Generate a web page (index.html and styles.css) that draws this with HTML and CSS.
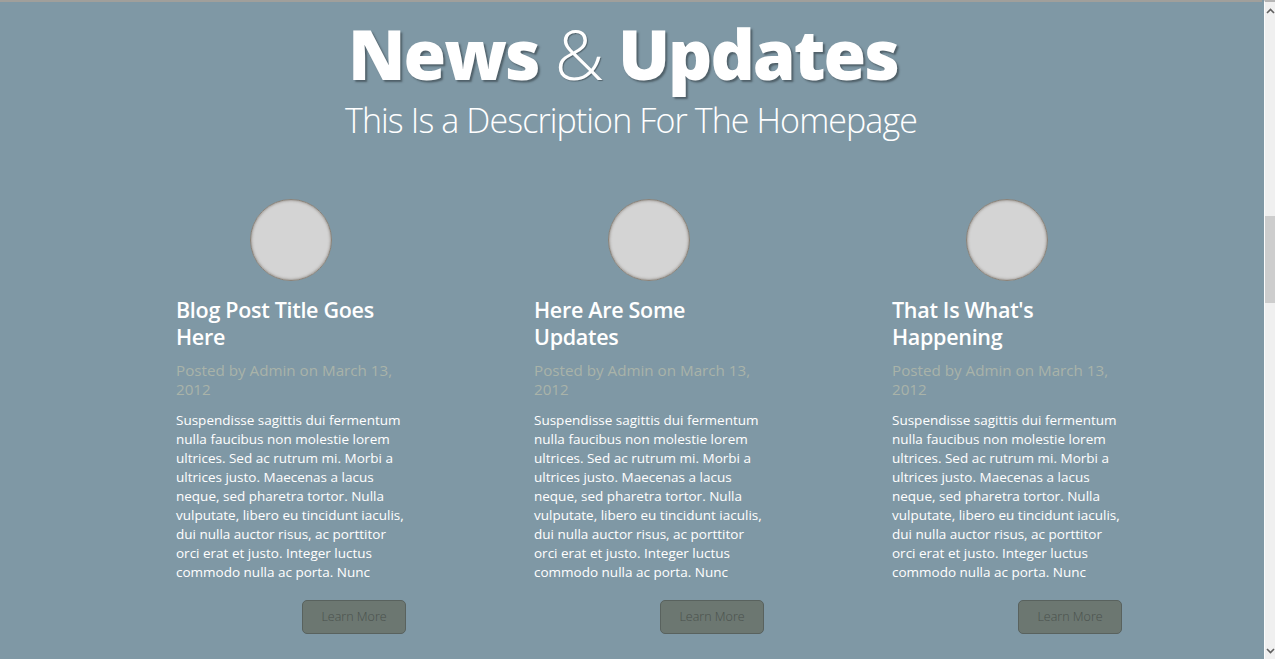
FILE: index.html
```html
<!DOCTYPE html>
<html>
<head>
<meta charset="utf-8">
<link rel="stylesheet" href="styles.css">
</head>
<body>
<section class="news">
  <header class="news-head">
    <h1 class="news-title"><strong>News</strong> <span class="amp">&amp;</span> <strong>Updates</strong></h1>
    <p class="news-desc">This Is a Description For The Homepage</p>
  </header>
  <div class="posts">
    <article class="post">
      <div class="thumb"></div>
      <h2 class="post-title">Blog Post Title Goes Here</h2>
      <p class="meta">Posted by Admin on March 13, 2012</p>
      <p class="excerpt">Suspendisse sagittis dui fermentum nulla faucibus non molestie lorem ultrices. Sed ac rutrum mi. Morbi a ultrices justo. Maecenas a lacus neque, sed pharetra tortor. Nulla vulputate, libero eu tincidunt iaculis, dui nulla auctor risus, ac porttitor orci erat et justo. Integer luctus commodo nulla ac porta. Nunc</p>
      <a class="btn" href="#">Learn More</a>
    </article>
    <article class="post">
      <div class="thumb"></div>
      <h2 class="post-title">Here Are Some Updates</h2>
      <p class="meta">Posted by Admin on March 13, 2012</p>
      <p class="excerpt">Suspendisse sagittis dui fermentum nulla faucibus non molestie lorem ultrices. Sed ac rutrum mi. Morbi a ultrices justo. Maecenas a lacus neque, sed pharetra tortor. Nulla vulputate, libero eu tincidunt iaculis, dui nulla auctor risus, ac porttitor orci erat et justo. Integer luctus commodo nulla ac porta. Nunc</p>
      <a class="btn" href="#">Learn More</a>
    </article>
    <article class="post">
      <div class="thumb"></div>
      <h2 class="post-title">That Is What's Happening</h2>
      <p class="meta">Posted by Admin on March 13, 2012</p>
      <p class="excerpt">Suspendisse sagittis dui fermentum nulla faucibus non molestie lorem ultrices. Sed ac rutrum mi. Morbi a ultrices justo. Maecenas a lacus neque, sed pharetra tortor. Nulla vulputate, libero eu tincidunt iaculis, dui nulla auctor risus, ac porttitor orci erat et justo. Integer luctus commodo nulla ac porta. Nunc</p>
      <a class="btn" href="#">Learn More</a>
    </article>
  </div>
</section>
<aside class="scrollbar" aria-hidden="true">
  <svg class="sb-arrow sb-up" width="9" height="6" viewBox="0 0 9 6"><path d="M1 5 L4.5 1.5 L8 5" fill="none" stroke="#606060" stroke-width="1.6"/></svg>
  <div class="sb-thumb"></div>
  <svg class="sb-arrow sb-down" width="9" height="6" viewBox="0 0 9 6"><path d="M1 1 L4.5 4.5 L8 1" fill="none" stroke="#606060" stroke-width="1.6"/></svg>
</aside>
</body>
</html>
```

FILE: styles.css
```css
html, body {
  margin: 0;
  padding: 0;
}
html {
  overflow: hidden;
}
body {
  background: #7f98a5;
  font-family: "Open Sans", "Liberation Sans", sans-serif;
  color: #fff;
  height: 659px;
  margin-right: 13px;
  border-top: 2px solid #a09f9b;
  box-sizing: border-box;
}
.news {
  display: flex;
  flex-direction: column;
  align-items: center;
}
.news-head {
  text-align: center;
  padding-top: 6px;
}
.news-title {
  margin: 0;
  padding-right: 16px;
  font-size: 69px;
  line-height: 90px;
  letter-spacing: -2px;
  font-weight: 800;
  text-shadow: 2px 2px 2px rgba(40, 50, 55, 0.55);
}
.news-title strong { font-weight: 800; }
.news-title .amp {
  font-weight: 300;
  text-shadow: 1px 1px 1px rgba(40, 50, 55, 0.5);
}
.news-desc {
  margin: -1px 0 0;
  font-size: 34px;
  font-weight: 300;
  line-height: 46px;
  letter-spacing: -0.9px;
}
.posts {
  display: grid;
  grid-template-columns: 230px 230px 230px;
  column-gap: 128px;
  margin-top: 56px;
  margin-left: 36px;
}
.post {
  display: flex;
  flex-direction: column;
}
.thumb {
  align-self: center;
  width: 80px;
  height: 80px;
  border-radius: 50%;
  background: #d4d4d4;
  border: 1px solid #8a8278;
  box-shadow: inset 0 0 3px rgba(90, 80, 70, 0.7);
}
.post-title {
  margin: 15px 0 0;
  font-size: 21.5px;
  font-weight: 600;
  line-height: 27px;
  letter-spacing: -0.3px;
}
.meta {
  margin: 11px 0 0;
  font-size: 15.2px;
  line-height: 19px;
  color: #a9b3a9;
}
.excerpt {
  margin: 12px 0 0;
  font-size: 13.5px;
  line-height: 19px;
}
.btn {
  align-self: flex-end;
  margin-top: 18px;
  width: 102px;
  height: 32px;
  line-height: 32px;
  text-align: center;
  background: #6c7771;
  border: 1px solid #59625e;
  border-radius: 5px;
  color: #4a514c;
  font-size: 12.5px;
  font-weight: 300;
  text-decoration: none;
}
.scrollbar {
  position: fixed;
  top: 0;
  right: 0;
  width: 11px;
  height: 659px;
  background: #f0f0f0;
  border-left: 1px solid #fdfdfd;
  border-top: 2px solid #b5b5b5;
  box-sizing: border-box;
}
.sb-arrow {
  position: absolute;
  left: 1px;
}
.sb-up { top: 6px; }
.sb-down { bottom: 5px; }
.sb-thumb {
  position: absolute;
  top: 214px;
  left: 0;
  width: 11px;
  height: 87px;
  background: #cdcdcd;
}
```
